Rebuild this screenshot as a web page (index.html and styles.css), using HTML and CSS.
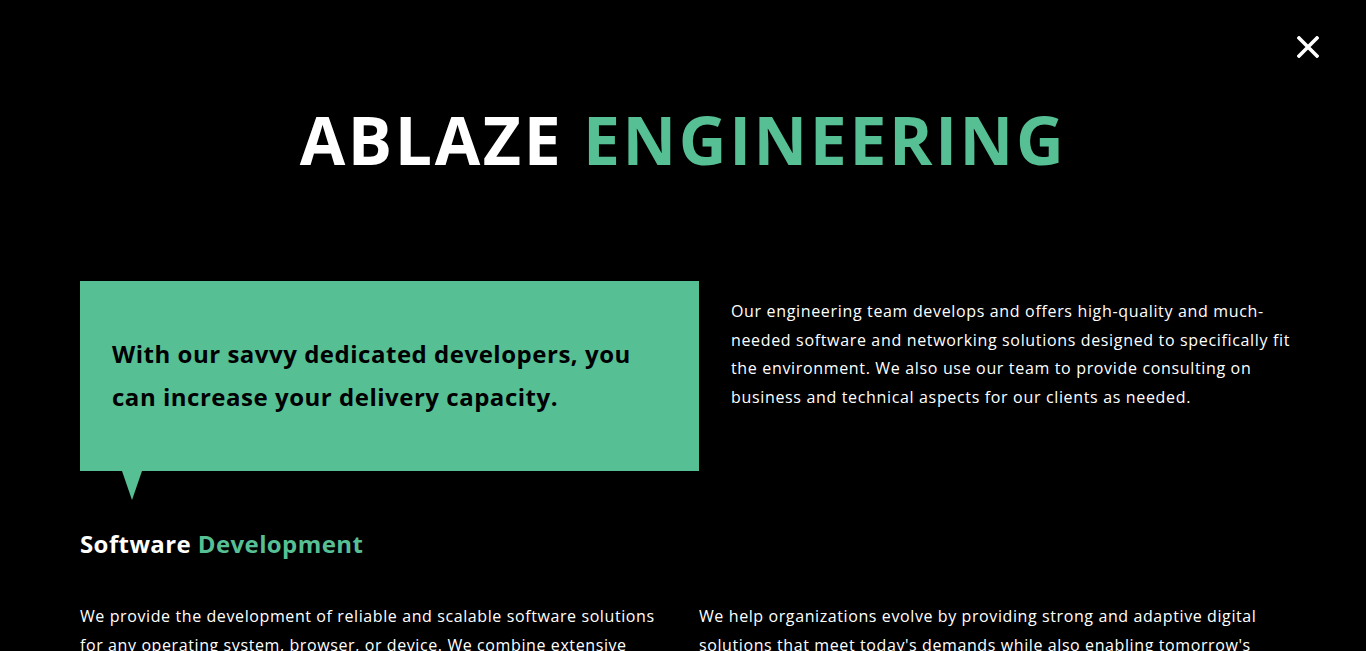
FILE: index.html
```html
<!DOCTYPE html>
<html lang="en">
<head>
<meta charset="utf-8">
<title>Ablaze Engineering</title>
<link rel="stylesheet" href="styles.css">
</head>
<body>
<div class="page">
  <button class="close" aria-label="Close">
    <svg width="22" height="22" viewBox="0 0 22 22"><path d="M2 2L20 20M20 2L2 20" stroke="#fff" stroke-width="3.6" stroke-linecap="square"/></svg>
  </button>
  <h1 class="title">ABLAZE <span class="accent">ENGINEERING</span></h1>
  <section class="intro">
    <div class="quote">
      <p>With our savvy dedicated developers, you can increase your delivery capacity.</p>
    </div>
    <p class="lead">Our engineering team develops and offers high-quality and much-needed software and networking solutions designed to specifically fit the environment. We also use our team to provide consulting on business and technical aspects for our clients as needed.</p>
  </section>
  <section class="service">
    <h2 class="service-title">Software <span class="accent">Development</span></h2>
    <div class="cols">
      <p>We provide the development of reliable and scalable software solutions for any operating system, browser, or device. We combine extensive industry expertise with technical know-how to deliver results.</p>
      <p>We help organizations evolve by providing strong and adaptive digital solutions that meet today's demands while also enabling tomorrow's opportunities for growth.</p>
    </div>
  </section>
</div>
</body>
</html>
```
FILE: styles.css
```css
html, body {
  margin: 0;
  padding: 0;
  background: #000;
  color: #fff;
  font-family: "Open Sans", "DejaVu Sans", sans-serif;
}
.page {
  position: relative;
  padding: 0 66px 0 80px;
  overflow: hidden;
}
.accent { color: #56bf94; }
.close {
  position: absolute;
  top: 36px;
  right: 47px;
  width: 22px;
  height: 22px;
  padding: 0;
  border: 0;
  background: none;
  display: block;
}
.close svg { display: block; }
.title {
  margin: 0 14px 0 0;
  padding-top: 106px;
  height: 277px;
  box-sizing: border-box;
  text-align: center;
  font-size: 66px;
  line-height: 1;
  font-weight: 700;
  letter-spacing: 2.6px;
}
.intro {
  margin-top: 4px;
  display: grid;
  grid-template-columns: 619px 1fr;
  column-gap: 32px;
  align-items: start;
}
.quote {
  position: relative;
  background: #56bf94;
  height: 190px;
  box-sizing: border-box;
  padding: 51px 32px 0;
}
.quote::after {
  content: "";
  position: absolute;
  left: 42px;
  top: 100%;
  border-left: 10px solid transparent;
  border-right: 10px solid transparent;
  border-top: 29px solid #56bf94;
}
.quote p {
  margin: 0;
  color: #000;
  font-size: 24px;
  font-weight: 700;
  line-height: 43px;
  letter-spacing: 0.52px;
}
.lead {
  margin: 16px 0 0;
  font-size: 16px;
  line-height: 28.7px;
  letter-spacing: 0.66px;
}
.service-title {
  margin: 58px 0 0;
  font-size: 24px;
  font-weight: 700;
  line-height: 30px;
  letter-spacing: 0.4px;
}
.cols {
  margin-top: 43px;
  display: grid;
  grid-template-columns: 619px 1fr;
}
.cols p {
  margin: 0;
  font-size: 16px;
  line-height: 28.5px;
  letter-spacing: 0.6px;
}
.cols p:first-child {
  padding-right: 32px;
}
```
